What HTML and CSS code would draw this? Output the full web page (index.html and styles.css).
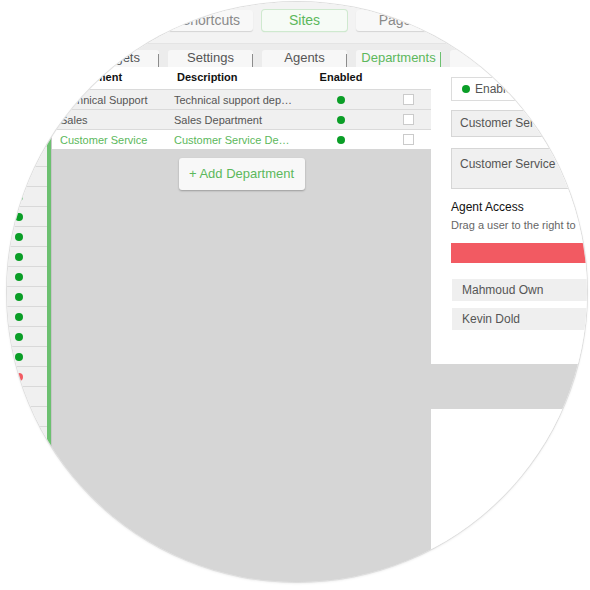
FILE: index.html
```html
<!DOCTYPE html>
<html>
<head>
<meta charset="utf-8">
<link rel="stylesheet" href="styles.css">
</head>
<body>
<div class="lens">
  <div class="screen">
    <div class="topbar">
      <div class="btn">Chats</div>
      <div class="btn">Shortcuts</div>
      <div class="btn active">Sites</div>
      <div class="btn">Pages</div>
      <div class="btn">Users</div>
    </div>
    <div class="tabbar">
      <div class="tab">Widgets</div>
      <div class="tab">Settings</div>
      <div class="tab">Agents</div>
      <div class="tab active">Departments</div>
      <div class="tab">Tags</div>
    </div>
    <div class="main">
      <div class="sidebar">
        <div class="srow"><span class="dot"></span></div>
        <div class="srow"><span class="dot"></span></div>
        <div class="srow"><span class="dot"></span></div>
        <div class="srow"><span class="dot"></span></div>
        <div class="srow"><span class="dot"></span></div>
        <div class="srow"><span class="dot"></span></div>
        <div class="srow"><span class="dot"></span></div>
        <div class="srow"><span class="dot"></span></div>
        <div class="srow"><span class="dot"></span></div>
        <div class="srow"><span class="dot"></span></div>
        <div class="srow"><span class="dot"></span></div>
        <div class="srow"><span class="dot"></span></div>
        <div class="srow"><span class="dot"></span></div>
        <div class="srow"><span class="dot"></span></div>
        <div class="srow"><span class="dot"></span></div>
        <div class="srow"><span class="dot red"></span></div>
        <div class="srow"></div>
        <div class="srow"></div>
        <div class="srow"></div>
        <div class="srow"></div>
      </div>
      <div class="accent"></div>
      <div class="center">
        <div class="thead">
          <div class="c1">Department</div>
          <div class="c2">Description</div>
          <div class="c3">Enabled</div>
          <div class="c4"></div>
        </div>
        <div class="trow">
          <div class="c1">Technical Support</div>
          <div class="c2">Technical support dep…</div>
          <div class="c3"><span class="dot"></span></div>
          <div class="c4"><span class="check"></span></div>
        </div>
        <div class="trow">
          <div class="c1">Sales</div>
          <div class="c2">Sales Department</div>
          <div class="c3"><span class="dot"></span></div>
          <div class="c4"><span class="check"></span></div>
        </div>
        <div class="trow sel">
          <div class="c1">Customer Service</div>
          <div class="c2">Customer Service De…</div>
          <div class="c3"><span class="dot"></span></div>
          <div class="c4"><span class="check"></span></div>
        </div>
        <div class="dropzone">
          <div class="addbtn">+ Add Department</div>
        </div>
      </div>
      <div class="panel">
        <div class="pcard">
          <div class="status"><span class="dot"></span><span>Enabled</span></div>
          <div class="field">Customer Service</div>
          <div class="field area">Customer Service</div>
          <div class="h">Agent Access</div>
          <div class="sub">Drag a user to the right to</div>
          <div class="redbar"></div>
          <div class="user">Mahmoud Own</div>
          <div class="user">Kevin Dold</div>
        </div>
        <div class="pgap"></div>
        <div class="pfoot"></div>
      </div>
    </div>
  </div>
</div>
</body>
</html>
```
FILE: styles.css
```css
* { box-sizing: border-box; }
html, body { margin: 0; padding: 0; background: #fff; }
body {
  width: 590px;
  height: 590px;
  overflow: hidden;
  font-family: "Liberation Sans", Arial, sans-serif;
}
.lens {
  width: 580px;
  height: 580px;
  margin: 2px 0 0 7px;
  border-radius: 50%;
  overflow: hidden;
  box-shadow: 0 0 0 1px #dedede, 0 1px 3px rgba(0,0,0,.12);
}
.screen {
  width: 590px;
  height: 590px;
  margin: -2px 0 0 -7px;
  display: flex;
  flex-direction: column;
  background: #f3f3f3;
}
.topbar {
  height: 44px;
  flex: none;
  display: flex;
  gap: 9px;
  padding: 10px 0 0 74px;
  background: #f3f3f3;
  border-bottom: 1px solid #e4e4e4;
}
.btn {
  flex: none;
  width: 85px;
  height: 21px;
  background: #f8f8f8;
  border-radius: 3px;
  box-shadow: 0 1px 1px rgba(0,0,0,.13);
  font-size: 14px;
  line-height: 21px;
  text-align: center;
  color: #8a8a8a;
}
.btn.active {
  color: #5cb85c;
  background: #f6fbf6;
  box-shadow: 0 0 0 1px #cfe9cf, 0 1px 1px rgba(92,184,92,.45);
}
.tabbar {
  height: 23px;
  flex: none;
  display: flex;
  gap: 9px;
  padding: 6px 0 0 74px;
  background: #ececec;
}
.tab {
  flex: none;
  width: 85px;
  height: 17px;
  background: #f7f7f7;
  border-radius: 3px 3px 0 0;
  font-size: 13px;
  line-height: 16px;
  text-align: center;
  color: #555;
  position: relative;
}
.tab::after {
  content: "";
  position: absolute;
  right: 0;
  bottom: 0;
  width: 1px;
  height: 13px;
  background: #8c8c8c;
}
.tab.active { color: #5cb85c; }
.tab.active::after { background: #6cc070; height: 15px; }

.main {
  flex: 1;
  display: flex;
  min-height: 0;
}
.sidebar {
  width: 47px;
  flex: none;
  background: #f0f0f0;
  overflow: hidden;
}
.srow {
  height: 20px;
  border-bottom: 1px solid #d9d9d9;
  display: flex;
  align-items: center;
  padding-left: 15px;
}
.dot {
  display: block;
  width: 8px;
  height: 8px;
  border-radius: 50%;
  background: #0a9e27;
  flex: none;
}
.dot.red { background: #f25a62; }
.accent {
  width: 4px;
  flex: none;
  background: #6cc070;
}
.center {
  width: 380px;
  flex: none;
  border-left: 1px solid #c6c6c6;
  background: #d6d6d6;
  display: flex;
  flex-direction: column;
}
.thead, .trow {
  display: grid;
  grid-template-columns: 118px 141px 60px 60px;
  align-items: center;
  white-space: nowrap;
}
.thead {
  height: 22px;
  background: #fff;
  font-size: 11px;
  font-weight: bold;
  color: #111;
  padding-bottom: 2px;
}
.thead .c1 { padding-left: 9px; }
.thead .c2 { padding-left: 7px; }
.trow {
  height: 20px;
  border-top: 1px solid #dadada;
  background: #f0f0f0;
  font-size: 11px;
  color: #555;
}
.trow.sel { background: #fff; color: #5cb85c; }
.c1 { padding-left: 8px; }
.c2 { padding-left: 4px; }
.c3 { display: flex; justify-content: center; text-align: center; }
.c4 { display: flex; padding-left: 32px; }
.check {
  display: block;
  width: 11px;
  height: 11px;
  background: #fff;
  border: 1px solid #cbcbcb;
}
.dropzone {
  flex: 1;
  display: flex;
  justify-content: center;
  align-items: flex-start;
  padding-top: 9px;
  background: #d6d6d6;
}
.addbtn {
  width: 126px;
  height: 32px;
  background: #f8f8f8;
  border-radius: 3px;
  box-shadow: 0 1px 2px rgba(0,0,0,.28);
  font-size: 13px;
  line-height: 32px;
  text-align: center;
  color: #5cb85c;
}
.panel {
  flex: 1;
  display: flex;
  flex-direction: column;
  overflow: hidden;
}
.pcard {
  height: 297px;
  flex: none;
  background: #fff;
  padding: 10px 0 0 20px;
  white-space: nowrap;
}
.status, .field, .redbar, .user { width: 200px; }
.status {
  height: 24px;
  border: 1px solid #dcdcdc;
  display: flex;
  align-items: center;
  gap: 5px;
  padding-left: 10px;
  font-size: 12px;
  color: #555;
}
.field {
  margin-top: 9px;
  height: 27px;
  background: #f0f0f0;
  border: 1px solid #d6d6d6;
  padding-left: 8px;
  font-size: 12px;
  line-height: 25px;
  color: #555;
}
.field.area {
  margin-top: 11px;
  height: 41px;
  line-height: 14px;
  padding-top: 8px;
}
.h {
  margin-top: 10px;
  font-size: 12px;
  line-height: 16px;
  color: #111;
}
.sub {
  margin-top: 3px;
  font-size: 11px;
  line-height: 14px;
  color: #666;
}
.redbar {
  margin-top: 11px;
  height: 20px;
  background: #f25a62;
}
.user {
  margin-top: 16px;
  margin-left: 1px;
  height: 22px;
  background: #efefef;
  padding-left: 10px;
  font-size: 12px;
  line-height: 22px;
  color: #555;
}
.user + .user { margin-top: 7px; }
.pgap {
  height: 45px;
  flex: none;
  background: #d6d6d6;
}
.pfoot {
  flex: 1;
  background: #fff;
}
```
